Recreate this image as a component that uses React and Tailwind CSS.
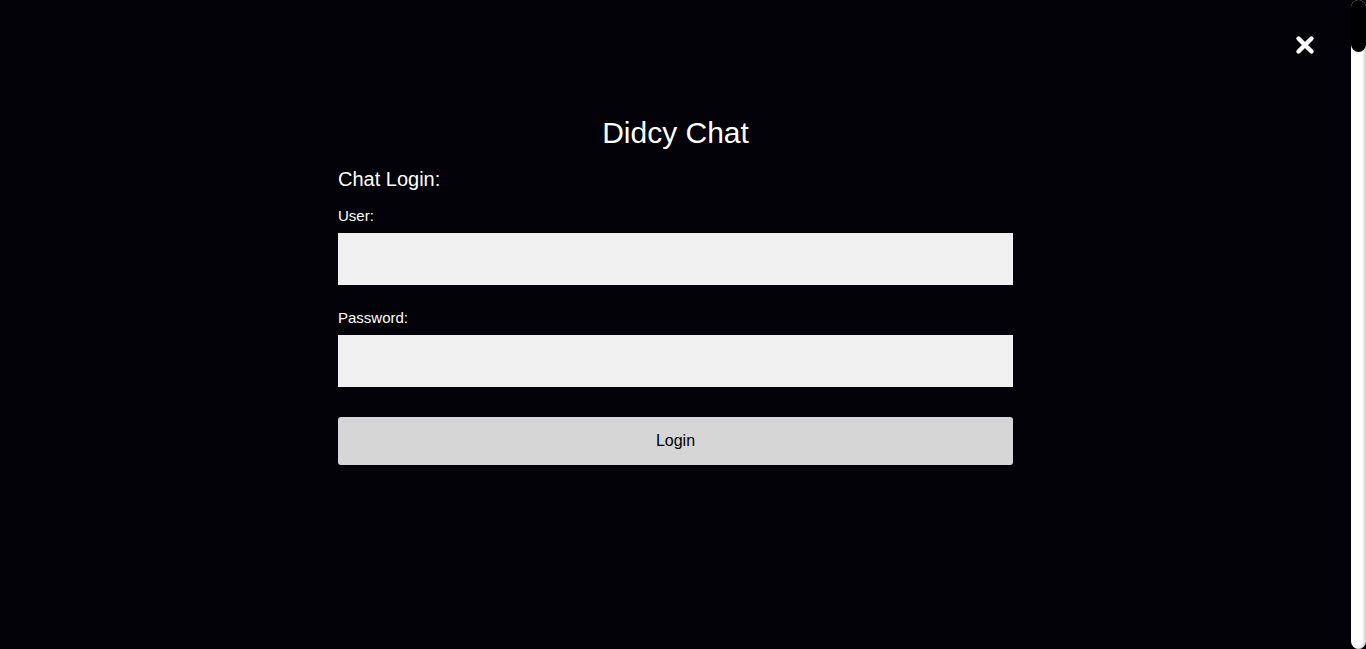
import React, { useState } from "react";

export default function App() {
  const [user, setUser] = useState("");
  const [password, setPassword] = useState("");

  return (
    <div className="flex h-[649px] w-full overflow-hidden bg-[#030208] font-['Liberation_Sans',Arial,sans-serif]">
      {/* Halaman utama */}
      <main className="relative flex-1">
        {/* Tombol tutup */}
        <button className="absolute right-[36px] top-[35px] w-[20px] h-[20px] text-white">
          <svg viewBox="0 0 20 20" className="w-[20px] h-[20px]">
            <path d="M3.5 3.5 L16.5 16.5 M16.5 3.5 L3.5 16.5" stroke="currentColor" strokeWidth="4.4" strokeLinecap="round" />
          </svg>
        </button>

        <div className="mx-auto w-[675px] pt-[116px]">
          <h1 className="text-center text-[30px] leading-[34px] text-white">Didcy Chat</h1>

          <form className="mt-[18px]" onSubmit={(e) => e.preventDefault()}>
            <h2 className="text-[20px] leading-[23px] text-white">Chat Login:</h2>

            <label className="mt-[16px] mb-[8px] block text-[15px] leading-[18px] text-white">User:</label>
            <input
              value={user}
              onChange={(e) => setUser(e.target.value)}
              className="block h-[52px] w-full bg-[#f0f0f0] px-3 text-black outline-none"
            />

            <label className="mt-[24px] mb-[8px] block text-[15px] leading-[18px] text-white">Password:</label>
            <input
              type="password"
              value={password}
              onChange={(e) => setPassword(e.target.value)}
              className="block h-[52px] w-full bg-[#f0f0f0] px-3 text-black outline-none"
            />

            <button
              type="submit"
              className="mt-[30px] block h-[48px] w-full rounded-[3px] bg-[#d6d6d6] text-[16px] text-black"
            >
              Login
            </button>
          </form>
        </div>
      </main>

      {/* Scrollbar */}
      <div className="relative w-[15px] shrink-0">
        <div className="h-full w-full rounded-full bg-white shadow-[inset_-2px_0_3px_rgba(0,0,0,0.2)]">
          <div className="h-[52px] w-full rounded-full bg-black" />
        </div>
      </div>
    </div>
  );
}
